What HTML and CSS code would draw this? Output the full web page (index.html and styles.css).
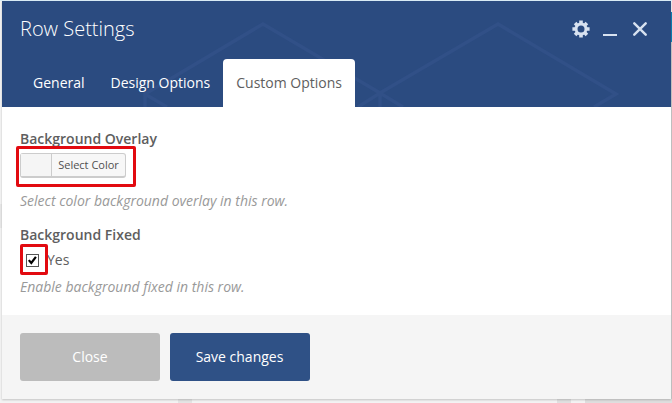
FILE: index.html
```html
<!DOCTYPE html>
<html lang="en">
<head>
<meta charset="utf-8">
<title>Row Settings</title>
<link rel="stylesheet" href="styles.css">
</head>
<body>
<div class="backdrop">
  <span class="rail rail-blue"></span>
  <span class="rail rail-right"></span>
  <span class="rail rail-left"></span>
  <span class="rail rail-a"></span>
  <span class="rail rail-b"></span>
  <span class="rail rail-c"></span>
</div>
<section class="panel">
  <header class="header">
    <svg class="pattern" viewBox="2 1 669 106" width="669" height="106" fill="none" stroke="#315087" stroke-width="3.5">
      <path d="M145 94L263 24L380 93L498 24L616 94L594 107M145 107V94L167 107M358 107L380 93L403 107M380 93V107"/>
    </svg>
    <div class="titlebar">
      <h1 class="title">Row Settings</h1>
      <div class="controls">
        <svg class="gear" width="18" height="18" viewBox="0 0 18 18">
          <path fill="none" stroke="#d8e2f0" stroke-width="3" d="M9 4a5 5 0 1 0 0 10a5 5 0 1 0 0-10z"/>
          <path fill="none" stroke="#d8e2f0" stroke-width="3.6" d="M9 .4v3M9 14.6v3M.4 9h3M14.6 9h3M3.1 3.1l1.8 1.8M13.1 13.1l1.8 1.8M3.1 14.9l1.8-1.8M13.1 4.9l1.8-1.8"/>
        </svg>
        <span class="minimize"></span>
        <svg class="close" width="14" height="14" viewBox="0 0 14 14"><path fill="none" stroke="#d8e2f0" stroke-width="2.4" stroke-linecap="round" d="M1.3 1.3l11.4 11.4M12.7 1.3L1.3 12.7"/></svg>
      </div>
    </div>
    <nav class="tabs">
      <a class="tab">General</a>
      <a class="tab">Design Options</a>
      <a class="tab active">Custom Options</a>
    </nav>
  </header>
  <main class="content">
    <div class="field">
      <h2 class="label">Background Overlay</h2>
      <div class="picker">
        <span class="swatch"></span><span class="picker-text">Select Color</span>
        <span class="mark mark-picker"></span>
      </div>
      <p class="hint hint-overlay">Select color background overlay in this row.</p>
    </div>
    <div class="field">
      <h2 class="label">Background Fixed</h2>
      <div class="check">
        <span class="box"><svg width="11" height="11" viewBox="0 0 11 11"><path fill="none" stroke="#000" stroke-width="2.2" d="M1.8 5.1L4.3 8L8.9 1.9"/></svg></span>
        <span class="check-text">Yes</span>
        <span class="mark mark-check"></span>
      </div>
      <p class="hint">Enable background fixed in this row.</p>
    </div>
  </main>
  <footer class="footer">
    <span class="button muted">Close</span>
    <span class="button primary">Save changes</span>
  </footer>
</section>
</body>
</html>
```

FILE: styles.css
```css
* { box-sizing: border-box; }
body {
  margin: 0;
  width: 672px;
  height: 403px;
  overflow: hidden;
  position: relative;
  padding: 1px 1px 4px 2px;
  background: #f1f1f1;
  font: 14px/20px "Open Sans", sans-serif;
  color: #5e5e5e;
}
h1, h2, p { margin: 0; }
.backdrop { position: absolute; inset: 0; background: linear-gradient(#dceef8 1px, #f3f3f3 1px); }
.rail { position: absolute; }
.rail-blue { right: 0; top: 12px; width: 1px; height: 30px; background: #0b85b8; }
.rail-right { right: 0; top: 42px; width: 1px; bottom: 0; background: #cbcbcb; }
.rail-left { left: 0; top: 204px; width: 2px; height: 24px; background: #e8e8e8; }
.rail-a { left: 178px; bottom: 0; width: 14px; height: 4px; background: #e4e4e4; }
.rail-b { left: 557px; bottom: 0; width: 14px; height: 4px; background: #e0e0e0; }
.rail-c { left: 585px; bottom: 0; right: 0; height: 4px; background: #dedede; }
.panel {
  position: relative;
  display: flex;
  flex-direction: column;
  height: 398px;
  background: #fff;
  box-shadow: 0 1px 2px rgba(0, 0, 0, .2);
}
.header {
  position: relative;
  height: 106px;
  display: flex;
  flex-direction: column;
  justify-content: space-between;
  background: #2b4b80;
}
.pattern { position: absolute; inset: 0; }
.titlebar {
  position: relative;
  display: flex;
  justify-content: space-between;
  height: 56px;
  padding: 0 24px 0 18px;
  align-items: center;
}
.title { font-size: 20px; line-height: 28px; font-weight: 300; color: #fff; }
.controls { display: flex; align-items: center; }
.minimize { width: 14px; height: 2px; margin: 12px 16px 0 13px; background: #d8e2f0; }
.tabs { position: relative; display: flex; height: 48px; padding-left: 18px; }
.tab { padding: 14px 13px; color: #fff; white-space: nowrap; }
.tab.active { background: #fff; color: #5e5e5e; border-radius: 4px 4px 0 0; }
.content { height: 208px; padding: 22px 18px 0; }
.label { font-size: 14px; line-height: 20px; font-weight: 600; }
.picker {
  position: relative;
  display: flex;
  width: 106px;
  height: 25px;
  margin-top: 4px;
  border: 1px solid #ccc;
  border-bottom-width: 2px;
  border-radius: 3px;
  background: #f7f7f7;
}
.swatch { width: 31px; border-right: 1px solid #ccc; background: #f5f5f5; }
.picker-text { flex: 1; text-align: center; font-size: 11px; line-height: 22px; color: #505050; white-space: nowrap; }
.mark { position: absolute; border: 3px solid #e20a10; border-radius: 2px; }
.mark-picker { left: -5px; top: -8px; width: 120px; height: 41px; }
.hint { font-style: italic; color: #999; }
.hint-overlay { margin: 13px 0 14px; }
.check { position: relative; display: flex; align-items: center; height: 20px; margin: 5px 0 7px; padding-left: 6px; }
.box { display: flex; width: 13px; height: 13px; border: 1px solid #555; background: #fff; margin-right: 8px; margin-top: 1px; }
.mark-check { left: 0; top: -6px; width: 28px; height: 31px; }
.footer { display: flex; gap: 10px; height: 84px; padding: 18px; background: #f5f5f5; }
.button { width: 140px; height: 48px; line-height: 48px; border-radius: 3px; text-align: center; color: #fff; }
.muted { background: #bcbcbc; }
.primary { padding-right: 1px; background: #2f5186; }
```
